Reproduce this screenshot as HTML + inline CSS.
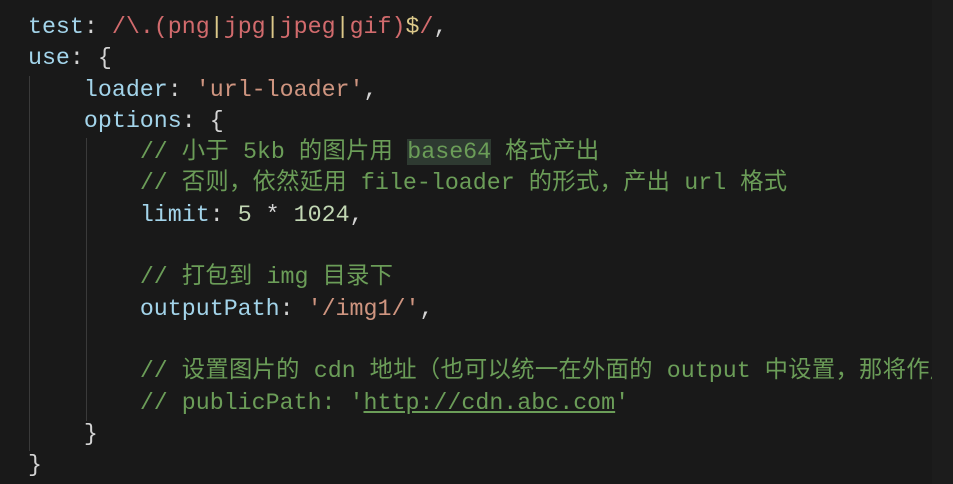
<!DOCTYPE html>
<html><head><meta charset="utf-8"><style>
html,body{margin:0;padding:0;background:#191919;width:953px;height:484px;overflow:hidden}
.c{position:absolute;left:0;top:12px;font-family:"Liberation Mono","Noto Sans CJK SC",monospace;font-size:23.3px;line-height:31.3px;white-space:pre;color:#d4d4d4}
.k{color:#a3d4ea}.s{color:#cf9580}.r{color:#d26b6d}.y{color:#dcc98a}.g{color:#6b9d58}.n{color:#c2d7b4}
.cj{letter-spacing:0.3px}
.h{background:#2e3a31}.u{text-decoration:underline}
.gl{position:absolute;width:1px;background:#3a3a3a}
.strip{position:absolute;left:932px;top:0;width:21px;height:484px;background:#1c1c1c;z-index:2}
</style></head><body>
<div class="strip"></div>
<div class="gl" style="left:29px;top:76px;height:375px"></div>
<div class="gl" style="left:86px;top:138px;height:283px"></div>
<div class="c">  <span class="k">test</span>: <span class="r">/\.(png<span class="y">|</span>jpg<span class="y">|</span>jpeg<span class="y">|</span>gif)<span class="y">$</span>/</span>,
  <span class="k">use</span>: {
      <span class="k">loader</span>: <span class="s">'url-loader'</span>,
      <span class="k">options</span>: {
          <span class="g">// <span class="cj">小于</span> 5kb <span class="cj">的图片用</span> <span class="h">base64</span> <span class="cj">格式产出</span></span>
          <span class="g">// <span class="cj">否则，依然延用</span> file-loader <span class="cj">的形式，产出</span> url <span class="cj">格式</span></span>
          <span class="k">limit</span>: <span class="n">5</span> * <span class="n">1024</span>,

          <span class="g">// <span class="cj">打包到</span> img <span class="cj">目录下</span></span>
          <span class="k">outputPath</span>: <span class="s">'/img1/'</span>,

          <span class="g">// <span class="cj">设置图片的</span> cdn <span class="cj">地址（也可以统一在外面的</span> output <span class="cj">中设置，那将作用</span></span>
          <span class="g">// publicPath: '<span class="u">http://cdn.abc.com</span>'</span>
      }
  }</div>
</body></html>
